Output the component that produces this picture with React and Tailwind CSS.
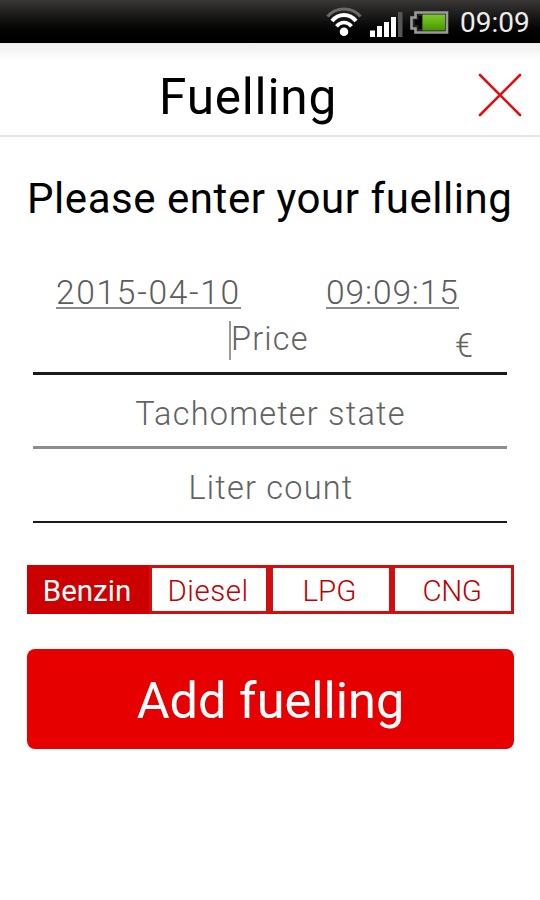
import React from 'react'

const FUELS = [
  { name: 'Benzin', spacing: 'pr-[2px]' },
  { name: 'Diesel', spacing: 'pr-[2px] tracking-[0.5px]' },
  { name: 'LPG', spacing: 'pr-[3px]' },
  { name: 'CNG', spacing: 'pr-[2px] tracking-[-0.5px]' },
]

const StatusBar = () => (
  <div className="flex h-[43px] items-start bg-linear-to-b from-[#3a3836] to-black pl-[326px]">
    {/* Wifi */}
    <svg className="mt-[6px] h-[32px] w-[36px] shrink-0" viewBox="0 0 36 32" fill="none">
      <path d="M1.500 10.500C10 0.500 26 0.500 34.500 10.500" stroke="#6a6a6a" strokeWidth="3" />
      <path d="M6 15C12.500 7 23.500 7 30 15" stroke="#fff" strokeWidth="4" />
      <path d="M10.500 20.300C14.500 15.200 21.500 15.200 25.500 20.300" stroke="#fff" strokeWidth="3.600" />
      <circle cx="18" cy="25.800" r="4.300" fill="#fff" />
    </svg>

    {/* Signal */}
    <svg className="ml-[7px] mt-[11px] h-[27px] w-[34px] shrink-0" viewBox="0 0 34 27">
      <rect x="1" y="19.500" width="5" height="6.500" fill="#fff" />
      <rect x="8" y="15" width="5" height="11" fill="#fff" />
      <rect x="15" y="11" width="5" height="15" fill="#fff" />
      <rect x="22" y="6" width="5" height="20" fill="#fff" />
      <rect x="29" y="1" width="4.500" height="25" fill="#555" />
    </svg>

    {/* Battery */}
    <svg className="ml-[6px] mt-[10px] h-[25px] w-[41px] shrink-0" viewBox="0 0 41 25">
      <defs>
        <linearGradient id="charge" x1="0" y1="0" x2="0" y2="1">
          <stop offset="0" stopColor="#7fca2a" />
          <stop offset="0.500" stopColor="#62b412" />
          <stop offset="1" stopColor="#459406" />
        </linearGradient>
      </defs>
      <path d="M6.500 2.500H38V22.500H6.500V18.500H2.500V7.500H6.500Z" fill="#222" stroke="#9a9a9a" strokeWidth="2.600" />
      <path d="M13 6H9.500V10H6V15H9.500V19H13Z" fill="#000" />
      <rect x="13.500" y="4.500" width="22.500" height="16" fill="url(#charge)" />
    </svg>

    <span className="ml-[10px] mt-[6px] text-[28px] leading-[34px] text-[#ececec]">09:09</span>
  </div>
)

const Header = () => (
  <header className="flex h-[94px] items-start border-b-2 border-[#e6e6e6] bg-linear-to-b from-[#efefef] to-white to-20% pt-[26px]">
    <h1 className="ml-[159px] w-[319px] text-[49.5px] leading-[56px] tracking-[0.8px] text-black">Fuelling</h1>
    <svg className="mt-[4px] h-[44px] w-[44px]" viewBox="0 0 44 44" fill="none">
      <path d="M2 2L42 42M42 2L2 42" stroke="#e01010" strokeWidth="2.600" strokeLinecap="round" />
    </svg>
  </header>
)

const FuelPicker = ({ selected }) => (
  <div className="mx-[27px] mt-[42px] grid h-[49px] grid-cols-[122px_121px_122px_122px] text-[29.5px] leading-[34px]">
    {FUELS.map((fuel) => (
      <div
        key={fuel.name}
        className={`flex items-center justify-center border-3 pt-[2px] ${fuel.spacing} ${
          fuel.name === selected
            ? 'border-[#cc0000] bg-[#cc0000] text-white'
            : 'border-[#d01010] bg-white font-light text-[#c00000]'
        } ${fuel.name === 'Diesel' ? 'border-r-4' : ''}`}
      >
        {fuel.name}
      </div>
    ))}
  </div>
)

const App = () => {
  return (
    <div className="h-[900px] w-[540px] overflow-hidden bg-white font-['Roboto',sans-serif] whitespace-nowrap">
      <StatusBar />
      <Header />

      <h2 className="mt-[38px] pl-[27px] text-[42px] leading-[48px] tracking-[0.55px] text-black">
        Please enter your fuelling
      </h2>

      {/* Date and time */}
      <div className="mt-[50px] flex pl-[56px] text-[33.5px] font-light leading-[40px] text-[#5c5c5c]">
        <span className="h-[36px] w-[185px] border-b-2 border-[#8c8c8c] tracking-[1.7px]">2015-04-10</span>
        <span className="ml-[85px] h-[36px] w-[133px] border-b-2 border-[#8c8c8c] tracking-[0.9px]">09:09:15</span>
      </div>

      <div className="mx-[33px] text-[32.5px] font-light tracking-[1.2px] text-[#626262]">
        <div className="flex h-[66px] items-start border-b-3 border-[#1a1a1a] pt-[12px]">
          <span className="ml-[196px] h-[39px] w-[2px] bg-[#999]" />
          <span className="w-[224px] leading-[37px]">Price</span>
          <span className="mt-[6px] leading-[38px]">€</span>
        </div>
        <div className="flex h-[74px] justify-center border-b-3 border-[#8e8e8e] pt-[20px] pl-[1px] leading-[38px]">
          Tachometer state
        </div>
        <div className="flex h-[74px] justify-center border-b-2 border-[#1a1a1a] pt-[20px] pl-[2px] leading-[38px]">
          Liter count
        </div>
      </div>

      <FuelPicker selected="Benzin" />

      <button className="mx-[27px] mt-[35px] block h-[100px] w-[487px] rounded-lg bg-[#e60000] pt-[3px] text-[50.5px] text-white">
        Add fuelling
      </button>
    </div>
  )
}

export default App
